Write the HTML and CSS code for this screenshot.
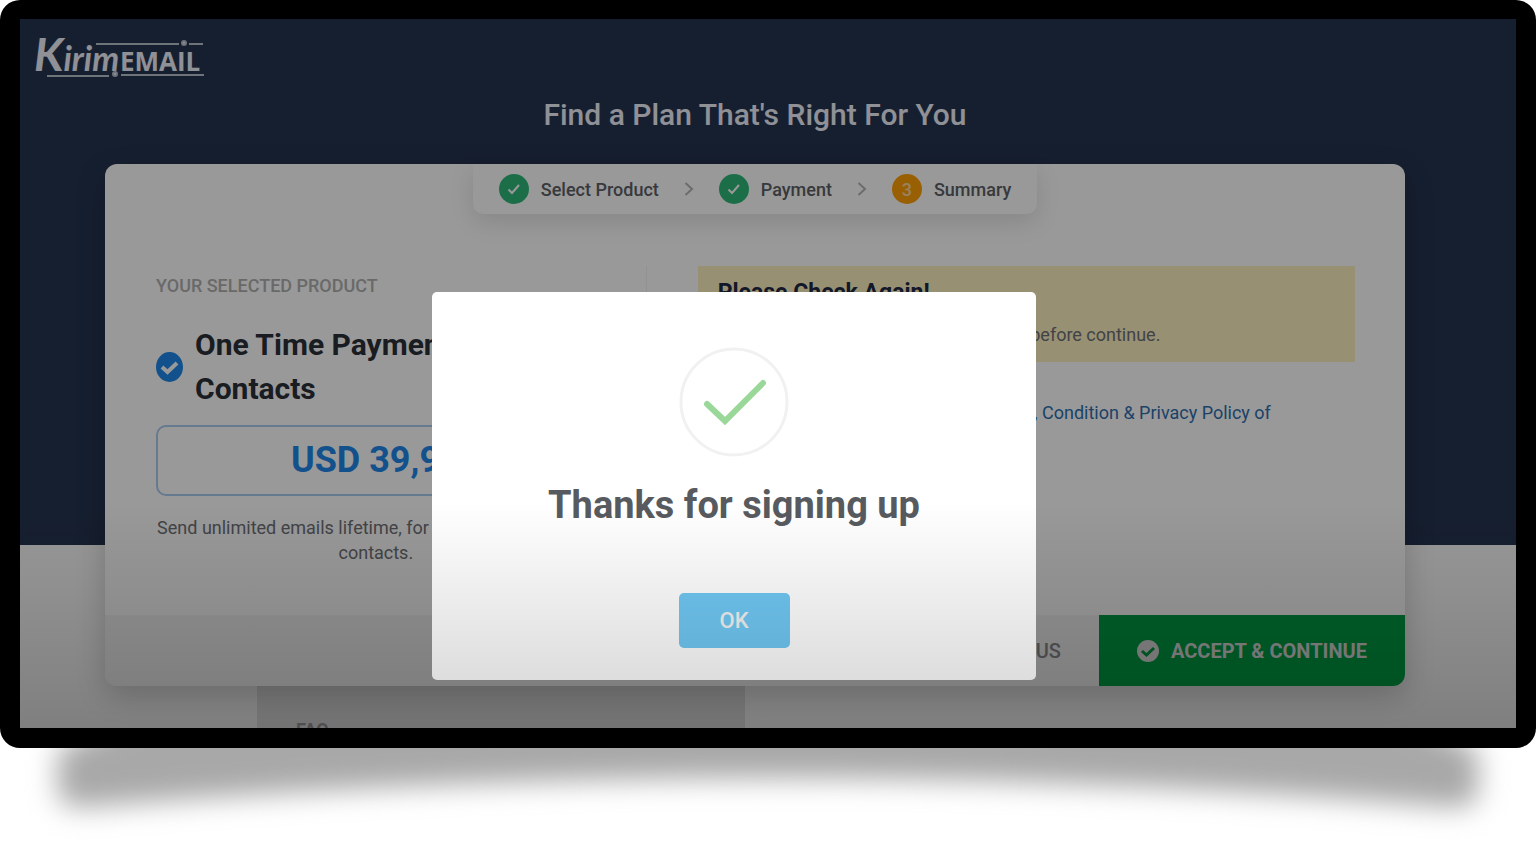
FILE: index.html
```html
<!DOCTYPE html>
<html lang="en">
<head>
  <meta charset="UTF-8">
  <meta name="viewport" content="width=device-width, initial-scale=1">
  <title>Kirim.Email - Summary</title>
  <link rel="stylesheet" href="styles.css">
</head>
<body>

  <div class="device">
    <div class="page">

      <header class="header">
        <a class="logo" href="#" aria-label="Kirim.Email">
          <svg width="174" height="54" viewBox="0 0 174 54">
            <text class="logo-script" x="0" y="44"><tspan class="logo-cap">K</tspan>irim</text>
            <text class="logo-name" x="86" y="44">EMAIL</text>
            <g class="logo-lines">
              <path d="M62 17H145M155 17H169M13 49H75M87 48H170"/>
              <circle cx="150" cy="16" r="2"/>
              <circle cx="81" cy="47" r="2"/>
            </g>
          </svg>
        </a>
      </header>

      <h1 class="title">Find a Plan That's Right For You</h1>

      <main class="card">
        <ol class="steps">
          <li class="step">
            <span class="step-icon done">
              <svg width="16" height="16" viewBox="0 0 16 16"><path d="M2.500 8.500L6 12L13 4"/></svg>
            </span>
            Select Product
          </li>
          <li class="step-arrow"><svg width="10" height="16" viewBox="0 0 10 16"><path d="M1.500 2L8 8L1.500 14"/></svg></li>
          <li class="step">
            <span class="step-icon done">
              <svg width="16" height="16" viewBox="0 0 16 16"><path d="M2.500 8.500L6 12L13 4"/></svg>
            </span>
            Payment
          </li>
          <li class="step-arrow"><svg width="10" height="16" viewBox="0 0 10 16"><path d="M1.500 2L8 8L1.500 14"/></svg></li>
          <li class="step">
            <span class="step-icon current">3</span>
            Summary
          </li>
        </ol>

        <div class="columns">
          <section class="product">
            <h2 class="label">YOUR SELECTED PRODUCT</h2>
            <div class="product-name">
              <svg width="27" height="30" viewBox="0 0 27 30">
                <ellipse cx="13.500" cy="15" rx="13.500" ry="15" fill="#1f87ea"/>
                <path d="M6 15L11.500 20L21 11" fill="none" stroke="#fff" stroke-width="4"/>
              </svg>
              <h3>One Time Payment 10.000 Contacts</h3>
            </div>
            <div class="price">USD 39,99</div>
            <p class="description">Send unlimited emails lifetime, for maximum of 10.000 contacts.</p>
          </section>

          <section class="review">
            <div class="alert">
              <h2>Please Check Again!</h2>
              <p>Please double check your order details before continue.</p>
            </div>
            <div class="terms">
              <input type="checkbox" id="agree" checked>
              <label for="agree">By continuing, I agree with the <a href="#">Terms, Condition &amp; Privacy Policy of KIRIM.EMAIL</a></label>
            </div>
          </section>
        </div>

        <footer class="actions">
          <button class="btn-previous" type="button">PREVIOUS</button>
          <button class="btn-accept" type="button">
            <svg width="22" height="22" viewBox="0 0 22 22">
              <circle cx="11" cy="11" r="11" fill="currentColor"/>
              <path d="M5 11L9.500 15L17 8" fill="none" stroke="#009a41" stroke-width="3"/>
            </svg>
            ACCEPT &amp; CONTINUE
          </button>
        </footer>
      </main>

      <section class="faq">
        <h2>FAQ</h2>
      </section>
    </div>

    <div class="overlay">
      <div class="modal" role="dialog" aria-labelledby="modalTitle">
        <svg width="110" height="110" viewBox="0 0 110 110">
          <circle cx="55" cy="55" r="53" fill="none" stroke="#f1f1f1" stroke-width="3"/>
          <path d="M28 57L46 74L84 36" fill="none" stroke="#99d898" stroke-width="6" stroke-linecap="round"/>
        </svg>
        <h2 id="modalTitle">Thanks for signing up</h2>
        <button class="btn-ok" type="button">OK</button>
      </div>
    </div>
  </div>

  <!-- curved shadow under the screen -->
  <svg class="device-shadow" viewBox="0 0 1536 116" preserveAspectRatio="none" aria-hidden="true">
    <filter id="soften" x="-10%" y="-50%" width="120%" height="200%">
      <feGaussianBlur stdDeviation="14"/>
    </filter>
    <path d="M58 2V42Q58 60 84 59Q768 1 1452 59Q1478 60 1478 42V2L1340 -60H196Z" fill="#a8a8a8" filter="url(#soften)"/>
  </svg>

</body>
</html>
```

FILE: styles.css
```css
* {
  box-sizing: border-box;
}

body {
  margin: 0;
  background: #fff;
  font-family: Roboto, "Liberation Sans", sans-serif;
  overflow: hidden;
}

h1, h2, h3, p, ol {
  margin: 0;
  padding: 0;
}

button {
  border: 0;
  font-family: inherit;
  cursor: pointer;
}

/* screen frame */
.device {
  position: relative;
  height: calc(100vh - 116px);
  border: 20px solid #000;
  border-top-width: 19px;
  border-radius: 20px;
  background: #000;
  overflow: hidden;
}

/* darker towards the bottom of the screen */
.device::after {
  content: "";
  position: absolute;
  inset: 0;
  background: linear-gradient(transparent 68%, rgba(0, 0, 0, 0.17));
  pointer-events: none;
}

.device-shadow {
  display: block;
  position: relative;
  z-index: -1;
  width: 100%;
  height: 116px;
}

.page {
  height: 100%;
  padding-right: 26px;
  background: linear-gradient(#253450 526px, #fff 526px);
  overflow: hidden;
}

.header {
  padding: 8px 14px 0;
}

.logo {
  display: block;
  width: 174px;
  height: 54px;
}

.logo svg {
  overflow: visible;
}

.logo text {
  fill: #eef2fa;
}

.logo-script {
  font: italic 700 34px Lato, sans-serif;
}

.logo-cap {
  font-size: 46px;
}

.logo-name {
  font: 700 26px "Open Sans", sans-serif;
}

.logo-lines {
  fill: #eef2fa;
  stroke: #b9c0cc;
  stroke-width: 2;
}

.title {
  margin-top: 14px;
  color: #eef2fa;
  font-size: 30px;
  font-weight: 500;
  line-height: 40px;
  text-align: center;
}

/* main card */
.card {
  position: relative;
  max-width: 1300px;
  margin: 29px auto 0;
  border-radius: 12px;
  background: #fff;
  box-shadow: 0 10px 30px rgba(0, 0, 0, 0.2);
}

.steps {
  display: flex;
  align-items: center;
  width: fit-content;
  height: 50px;
  margin: 0 auto;
  padding: 0 26px;
  border-radius: 0 0 10px 10px;
  box-shadow: 0 8px 24px rgba(0, 0, 0, 0.12);
  list-style: none;
}

.step {
  display: flex;
  align-items: center;
  gap: 12px;
  color: #5c5f66;
  font-size: 18px;
  font-weight: 500;
}

.step-arrow {
  display: flex;
  margin: 0 25px;
}

.step-arrow path {
  fill: none;
  stroke: #b5b5b8;
  stroke-width: 2;
}

.step-icon {
  display: flex;
  align-items: center;
  justify-content: center;
  width: 30px;
  height: 30px;
  border-radius: 50%;
  color: #ffd9a0;
}

.step-icon path {
  fill: none;
  stroke: #fff;
  stroke-width: 2;
}

.done {
  background: #30b87a;
}

.current {
  background: #ff9f05;
}

.columns {
  display: grid;
  grid-template-columns: 5fr 7fr;
  padding: 52px 0 50px;
}

.product {
  padding: 8px 50px 0 51px;
  border-right: 1px solid #f2f2f2;
}

.label {
  color: #b0b0b0;
  font-size: 18px;
  font-weight: 500;
  line-height: 24px;
}

.product-name {
  display: flex;
  align-items: center;
  gap: 12px;
  margin-top: 25px;
}

.product-name svg {
  flex: none;
}

.product-name h3 {
  color: #2b2f38;
  font-size: 30px;
  font-weight: 700;
  line-height: 44px;
}

.price {
  margin-top: 14px;
  border: 2px solid #aacbee;
  border-radius: 10px;
  color: #1f87ea;
  font-size: 36px;
  font-weight: 700;
  line-height: 67px;
  text-align: center;
}

.description {
  margin-top: 19px;
  color: #6e7076;
  font-size: 18px;
  line-height: 25px;
  text-align: center;
}

.review {
  padding: 0 50px 0 51px;
}

.alert {
  padding: 12px 20px 14px;
  background: #fdf1bf;
}

.alert h2 {
  color: #1f2844;
  font-size: 23px;
  font-weight: 700;
  line-height: 30px;
}

.alert p {
  margin-top: 14px;
  color: #6e7076;
  font-size: 18px;
  line-height: 26px;
}

.terms {
  display: flex;
  align-items: flex-start;
  gap: 10px;
  margin-top: 38px;
  padding: 0 20px;
  color: #6e7076;
  font-size: 18px;
  line-height: 25px;
}

.terms input {
  margin: 5px 0;
}

.terms a {
  color: #2f6fae;
  text-decoration: none;
}

.actions {
  display: flex;
  justify-content: flex-end;
  border-radius: 0 0 12px 12px;
  background: #f5f5f5;
  overflow: hidden;
}

.actions button {
  height: 71px;
  padding: 0 38px;
  font-size: 20px;
  font-weight: 500;
}

.actions .btn-previous {
  background: none;
  color: #8a8b90;
}

.actions .btn-accept {
  display: flex;
  align-items: center;
  gap: 12px;
  background: #009f44;
  color: #dcdcdc;
  font-weight: 700;
}

/* section below the card */
.faq {
  width: 488px;
  margin-left: 237px;
  padding: 34px 39px;
  background: #e6e6e6;
}

.faq h2 {
  color: #9c9ca0;
  font-size: 18px;
  font-weight: 700;
  line-height: 20px;
}

/* dialog */
.overlay {
  position: absolute;
  inset: 0;
  display: flex;
  align-items: flex-start;
  justify-content: center;
  padding: 273px 68px 0 0;
  background: rgba(0, 0, 0, 0.4);
}

.modal {
  display: flex;
  flex-direction: column;
  align-items: center;
  width: 604px;
  padding: 55px 20px 32px;
  border-radius: 5px;
  background: #fff;
}

.modal h2 {
  margin: 24px 0 64px;
  color: #575a5e;
  font-size: 38px;
  font-weight: 700;
  line-height: 48px;
}

.btn-ok {
  width: 111px;
  height: 55px;
  border-radius: 5px;
  background: #70c8f4;
  color: #f2f2f2;
  font-size: 22px;
  font-weight: 500;
}
```
